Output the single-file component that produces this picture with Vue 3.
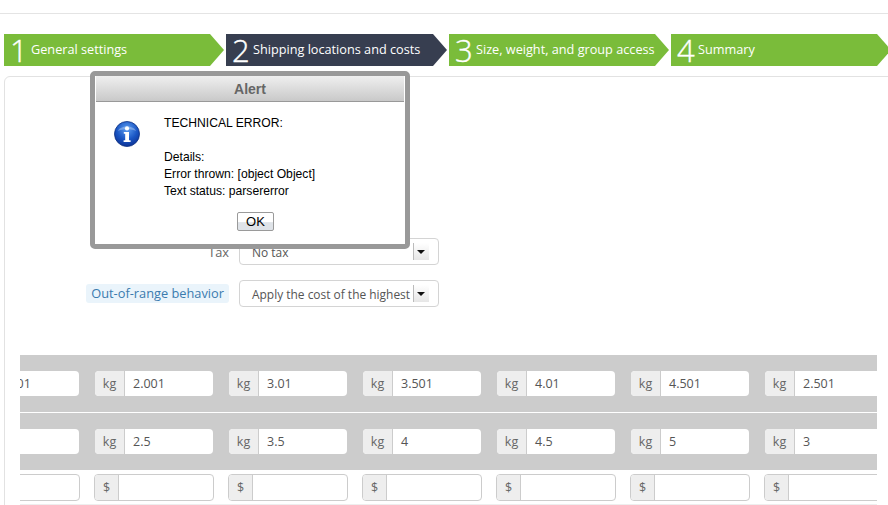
<template>
  <div class="page">
    <div class="top-rule"></div>

    <div class="steps">
      <div
        v-for="step in steps"
        :key="step.num"
        class="step"
        :class="{ active: step.active }"
      >
        <span class="step-num">{{ step.num }}</span>
        <span class="step-label">{{ step.label }}</span>
      </div>
    </div>

    <div class="panel">
      <div class="form-row">
        <label class="form-label">Tax</label>
        <div class="select">
          <span class="select-value">No tax</span>
          <span class="select-arrow"></span>
        </div>
      </div>
      <div class="form-row">
        <label class="form-label highlighted">Out-of-range behavior</label>
        <div class="select">
          <span class="select-value">Apply the cost of the highest</span>
          <span class="select-arrow"></span>
        </div>
      </div>

      <div class="table-wrap">
        <div class="band band-grey">
          <div v-for="(v, i) in fromValues" :key="i" class="field flat">
            <span class="field-unit">kg</span>
            <span class="field-value">{{ v }}</span>
          </div>
        </div>
        <div class="band band-grey band-second">
          <div v-for="(v, i) in toValues" :key="i" class="field flat">
            <span class="field-unit">kg</span>
            <span class="field-value">{{ v }}</span>
          </div>
        </div>
        <div class="band band-cost">
          <div v-for="n in 7" :key="n" class="field">
            <span class="field-unit">$</span>
            <span class="field-value"></span>
          </div>
        </div>
      </div>
    </div>

    <div class="alert">
      <div class="alert-title">Alert</div>
      <div class="alert-body">
        <svg class="alert-icon" viewBox="0 0 26 26" aria-hidden="true">
          <defs>
            <radialGradient id="infoFill" cx="50%" cy="30%" r="75%">
              <stop offset="0" stop-color="#5d9df0" />
              <stop offset="0.55" stop-color="#1a56c4" />
              <stop offset="1" stop-color="#0a2d8f" />
            </radialGradient>
          </defs>
          <circle cx="13" cy="13" r="12.5" fill="url(#infoFill)" stroke="#0b2f80" stroke-width="0.8" />
          <path d="M4 10C6 4 20 4 22 10C18 7.5 8 7.5 4 10Z" fill="#fff" opacity="0.3" />
          <circle cx="13" cy="7.4" r="2.1" fill="#fff" />
          <path d="M9.8 11h5.2v8.2h1.6V21H9.6v-1.8h1.6v-6.4H9.8Z" fill="#fff" />
        </svg>
        <div class="alert-message">
          <p>TECHNICAL ERROR:</p>
          <p>&nbsp;</p>
          <p>Details:</p>
          <p>Error thrown: [object Object]</p>
          <p>Text status: parsererror</p>
        </div>
      </div>
      <div class="alert-actions">
        <button class="alert-ok" type="button">OK</button>
      </div>
    </div>
  </div>
</template>

<script setup>
const steps = [
  { num: 1, label: 'General settings' },
  { num: 2, label: 'Shipping locations and costs', active: true },
  { num: 3, label: 'Size, weight, and group access' },
  { num: 4, label: 'Summary' }
]

const fromValues = ['1.001', '2.001', '3.01', '3.501', '4.01', '4.501', '2.501']
const toValues = ['', '2.5', '3.5', '4', '4.5', '5', '3']
</script>

<style>
html,
body {
  margin: 0;
  background: #fff;
  overflow: hidden;
}
</style>

<style scoped>
.page {
  position: relative;
  width: 888px;
  height: 505px;
  overflow: hidden;
  padding-top: 13px;
  box-sizing: border-box;
  background: #fff;
  font-family: "Open Sans", "Liberation Sans", sans-serif;
}

.top-rule {
  height: 1px;
  background: #e4e4e4;
}

.steps {
  display: flex;
  gap: 2px;
  margin: 20px 0 0 4px;
  width: 900px;
}

.step {
  display: flex;
  align-items: center;
  flex: none;
  width: 220px;
  height: 32px;
  padding-left: 6px;
  box-sizing: border-box;
  background: #7abc3a;
  color: #fff;
  clip-path: polygon(0 0, 206px 0, 220px 50%, 206px 100%, 0 100%);
}

.step.active {
  width: 221px;
  background: #373e50;
  clip-path: polygon(0 0, 207px 0, 221px 50%, 207px 100%, 0 100%);
}

.step-num {
  width: 21px;
  font-size: 31px;
  font-weight: 300;
  line-height: 32px;
  -webkit-text-stroke: 0.4px #fff;
}

.step-label {
  padding-bottom: 2px;
  font-size: 12.7px;
  white-space: nowrap;
}

.panel {
  width: 930px;
  height: 440px;
  margin: 10px 0 0 4px;
  padding-top: 161px;
  box-sizing: border-box;
  border: 1px solid #e2e2e2;
  border-radius: 6px;
}

.form-row {
  display: flex;
  align-items: center;
  justify-content: flex-end;
  gap: 10px;
  width: 434px;
  height: 27px;
  margin-bottom: 15px;
}

.form-label {
  padding-top: 2px;
  border-radius: 3px;
  font-size: 12.8px;
  line-height: 17px;
  color: #666;
}

.form-label.highlighted {
  padding: 1px 5px 1px 5px;
  background: #eaf4fb;
  color: #3b7bae;
}

.select {
  display: flex;
  align-items: center;
  justify-content: space-between;
  width: 200px;
  height: 27px;
  padding: 0 9px 0 12px;
  box-sizing: border-box;
  border: 1px solid #d4d4d4;
  border-radius: 4px;
  font-size: 11.95px;
  color: #555;
  white-space: nowrap;
}

.select-value {
  padding-top: 2px;
}

.select-arrow {
  position: relative;
  flex: none;
  width: 16px;
  height: 17px;
  box-sizing: border-box;
  border-left: 1px solid #bbb;
  background: linear-gradient(#fff, #e6e6e6);
}

.select-arrow::after {
  content: "";
  position: absolute;
  left: 3px;
  top: 7px;
  border: 4px solid transparent;
  border-bottom-width: 0;
  border-top-color: #111;
}

.table-wrap {
  width: 857px;
  margin: 48px 0 0 15px;
  overflow: hidden;
}

.band {
  display: flex;
  width: 1000px;
}

.band-grey {
  align-items: center;
  gap: 16px;
  height: 57px;
  padding-left: 0;
  background: #ccc;
}

.band-second {
  margin-top: 1px;
}

.band-cost {
  gap: 14px;
  padding: 4px 0 3px;
  border-bottom: 1px solid #eee;
}

.field {
  display: flex;
  flex: none;
  width: 120px;
  height: 27px;
  box-sizing: border-box;
  border: 1px solid #ccc;
  border-radius: 4px;
  overflow: hidden;
  background: #fff;
  font-size: 12.5px;
  line-height: 25px;
  color: #555;
}

.band-grey .field:first-child {
  margin-left: -59px;
}

.band-cost .field:first-child {
  margin-left: -60px;
}

.field.flat {
  width: 118px;
  height: 25px;
  border: 0;
}

.field-unit {
  flex: none;
  width: 24px;
  box-sizing: border-box;
  border-right: 1px solid #ccc;
  background: #eee;
  text-align: center;
  color: #666;
}

.field.flat .field-unit {
  width: 30px;
}

.field-value {
  padding-left: 8px;
}

.alert {
  position: absolute;
  left: 90px;
  top: 71px;
  width: 320px;
  height: 178px;
  box-sizing: border-box;
  border: 5px solid #999;
  border-radius: 5px;
  background: #fff;
  font-family: "Liberation Sans", Arial, sans-serif;
  font-size: 12.15px;
  color: #000;
}

.alert-title {
  height: 26px;
  margin: 0 1px;
  box-sizing: border-box;
  border-bottom: 1px solid #999;
  background: linear-gradient(#efefef, #c9c9c9);
  font-size: 14px;
  font-weight: 700;
  line-height: 26px;
  text-align: center;
  color: #666;
}

.alert-body {
  display: flex;
  padding: 13px 0 0 19px;
}

.alert-icon {
  flex: none;
  width: 26px;
  height: 26px;
  margin-top: 6px;
}

.alert-message {
  margin-left: 24px;
}

.alert-message p {
  margin: 0;
  line-height: 17px;
}

.alert-actions {
  display: flex;
  justify-content: center;
  margin-top: 12px;
  padding-left: 11px;
}

.alert-ok {
  width: 37px;
  height: 19px;
  padding: 0;
  border: 1px solid #9a9a9a;
  border-radius: 2px;
  background: linear-gradient(#fff 55%, #dfe3e8 56%);
  font-family: "Liberation Sans", Arial, sans-serif;
  font-size: 13px;
  line-height: 17px;
  color: #000;
}
</style>
